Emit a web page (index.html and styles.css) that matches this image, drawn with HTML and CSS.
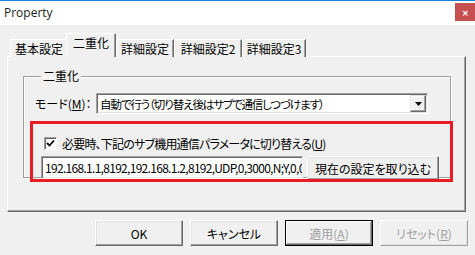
FILE: index.html
```html
<!DOCTYPE html>
<html lang="ja">
<head>
  <meta charset="UTF-8">
  <title>Property</title>
  <link rel="stylesheet" href="styles.css">
</head>
<body>
  <div class="window">
    <div class="titlebar">
      <span class="title">Property</span>
      <span class="close">&#x2715;</span>
    </div>
    <div class="client">
      <div class="tabs">
        <div class="tab tab-kihon">基本設定</div>
        <div class="tab active tab-niju">二重化</div>
        <div class="tab tab-shosai">詳細設定</div>
        <div class="tab tab-shosai2">詳細設定2</div>
        <div class="tab tab-shosai3">詳細設定3</div>
      </div>
      <div class="panel">
        <fieldset class="group">
          <legend>二重化</legend>
          <div class="mode-row">
            <label class="mode-label">モード(<u>M</u>)：</label>
            <div class="combo">
              <span class="combo-text">自動で行う（切り替え後はサブで通信しつづけます）</span>
              <span class="combo-btn">
                <svg width="7" height="4" viewBox="0 0 7 4"><path d="M0 0h7L3.5 4z" fill="#000"/></svg>
              </span>
            </div>
          </div>
          <div class="check-row">
            <span class="checkbox">
              <svg width="9" height="9" viewBox="0 0 9 9"><path d="M1 4l2.5 2.5L8 1.5" stroke="#000" stroke-width="1.8" fill="none"/></svg>
            </span>
            <span class="check-text">必要時、下記のサブ機用通信パラメータに切り替える(<u>U</u>)</span>
          </div>
          <div class="param-row">
            <div class="edit"><span class="edit-text">192.168.1.1,8192,192.168.1.2,8192,UDP,0,3000,N;Y,0,0,0</span></div>
            <button class="btn btn-import">現在の設定を取り込む</button>
          </div>
        </fieldset>
        <div class="highlight"></div>
      </div>
      <div class="buttons">
        <button class="btn btn-dlg">OK</button>
        <button class="btn btn-dlg">キャンセル</button>
        <button class="btn btn-dlg btn-default disabled">適用(<u>A</u>)</button>
        <button class="btn btn-dlg btn-flat disabled">リセット(<u>R</u>)</button>
      </div>
    </div>
  </div>
</body>
</html>
```

FILE: styles.css
```css
body {
  margin: 0;
  background-color: #f0f0f0;
  font-family: "Noto Sans CJK JP", sans-serif;
  font-size: 12px;
  font-feature-settings: "palt" 1;
  color: #000;
}

.window {
  width: 475px;
  height: 255px;
  overflow: hidden;
}

.titlebar {
  height: 24px;
  background-color: #fff;
  border-top: 1px solid #1883d7;
  display: flex;
  justify-content: space-between;
  align-items: flex-start;
}

.title {
  font-family: "Open Sans", "Noto Sans", sans-serif;
  font-size: 12px;
  color: #1b1b1b;
  padding: 4px 0 0 4px;
  line-height: 16px;
}

.close {
  width: 20px;
  height: 18px;
  margin-top: 2px;
  background-color: #c75050;
  color: #fff;
  font-size: 8px;
  font-weight: bold;
  display: flex;
  align-items: center;
  justify-content: center;
}

.client {
  padding: 8px 0 0 7px;
}

/* tabs */
.tabs {
  display: flex;
  align-items: flex-end;
  padding-left: 3px;
  height: 24px;
  position: relative;
  z-index: 1;
}

.tab {
  height: 18px;
  line-height: 18px;
  box-sizing: border-box;
  border-top: 1px solid #fff;
  border-left: 1px solid #fff;
  border-right: 1px solid #696969;
  box-shadow: inset -1px 0 #a0a0a0;
  text-align: center;
  background-color: #f0f0f0;
}

.tab-kihon { width: 58px; }
.tab-niju { width: 50px; }
.tab-shosai { width: 58px; }
.tab-shosai2 { width: 68px; }
.tab-shosai3 { width: 64px; }

.tab.active {
  height: 24px;
  line-height: 17px;
  margin: 0 -2px 0 -2px;
  position: relative;
  z-index: 2;
}

.tab-shosai {
  margin-left: 2px;
}

/* panel */
.panel {
  position: relative;
  width: 459px;
  height: 156px;
  margin-top: -1px;
  box-sizing: border-box;
  border-top: 1px solid #fff;
  border-left: 1px solid #fff;
  border-right: 1px solid #696969;
  border-bottom: 1px solid #696969;
  box-shadow: inset -1px -1px #a0a0a0;
  padding: 12px 0 0 15px;
}

.group {
  margin: 0;
  width: 428px;
  height: 109px;
  box-sizing: border-box;
  padding: 0 0 0 11px;
  border: 1px solid #a0a0a0;
  box-shadow: inset 1px 1px #fff, 1px 1px #fff;
}

.group legend {
  padding: 0 2px;
  margin-left: 6px;
  line-height: 14px;
}

.mode-row {
  display: flex;
  align-items: center;
  margin-top: 10px;
}

.mode-label {
  width: 61px;
}

.combo {
  width: 332px;
  height: 21px;
  box-sizing: border-box;
  display: flex;
  align-items: center;
  justify-content: space-between;
  background-color: #fff;
  border-top: 1px solid #a0a0a0;
  border-left: 1px solid #a0a0a0;
  border-right: 1px solid #fff;
  border-bottom: 1px solid #fff;
  box-shadow: inset 1px 1px #696969, inset -1px -1px #e3e3e3;
}

.combo-text {
  padding-left: 3px;
  white-space: nowrap;
  font-size: 11.5px;
  letter-spacing: -1.1px;
}

.combo-btn {
  width: 16px;
  height: 17px;
  box-sizing: border-box;
  margin-right: 1px;
  display: flex;
  align-items: center;
  justify-content: center;
  background-color: #f0f0f0;
  border-top: 1px solid #e3e3e3;
  border-left: 1px solid #e3e3e3;
  border-right: 1px solid #696969;
  border-bottom: 1px solid #696969;
  box-shadow: inset -1px -1px #a0a0a0, inset 1px 1px #fff;
}

.check-row {
  display: flex;
  align-items: center;
  margin-top: 22px;
  padding-left: 9px;
  height: 14px;
}

.check-text {
  letter-spacing: -0.8px;
}

.checkbox {
  width: 13px;
  height: 13px;
  box-sizing: border-box;
  display: flex;
  align-items: center;
  justify-content: center;
  background-color: #fff;
  border-top: 1px solid #a0a0a0;
  border-left: 1px solid #a0a0a0;
  border-right: 1px solid #fff;
  border-bottom: 1px solid #fff;
  box-shadow: inset 1px 1px #696969;
  margin-right: 5px;
}

.param-row {
  display: flex;
  align-items: flex-start;
  margin-top: 6px;
  margin-left: 6px;
  gap: 4px;
}

.edit {
  width: 262px;
  height: 23px;
  box-sizing: border-box;
  line-height: 21px;
  padding-left: 3px;
  white-space: nowrap;
  overflow: hidden;
  background-color: #fff;
  border-top: 1px solid #a0a0a0;
  border-left: 1px solid #a0a0a0;
  border-right: 1px solid #fff;
  border-bottom: 1px solid #fff;
  box-shadow: inset 1px 1px #696969, inset -1px -1px #e3e3e3;
}

.edit-text {
  letter-spacing: -0.7px;
}

/* buttons */
.btn {
  font-family: inherit;
  font-size: 12px;
  font-feature-settings: "palt" 1;
  color: #000;
  background-color: #f0f0f0;
  box-sizing: border-box;
  padding: 0;
  border-top: 1px solid #fff;
  border-left: 1px solid #fff;
  border-right: 1px solid #696969;
  border-bottom: 1px solid #696969;
  box-shadow: inset -1px -1px #a0a0a0, inset 1px 1px #e3e3e3;
}

.btn-import {
  width: 132px;
  height: 24px;
}

.highlight {
  position: absolute;
  left: 22px;
  top: 64px;
  width: 423px;
  height: 61px;
  box-sizing: border-box;
  border: 3px solid #e81c24;
}

.buttons {
  display: flex;
  justify-content: flex-end;
  gap: 7px;
  margin-top: 8px;
  padding-right: 7px;
}

.btn-dlg {
  width: 88px;
  height: 26px;
}

.btn.disabled {
  color: #a0a0a0;
}

.btn-default {
  border: 1px solid #000;
  box-shadow: inset -1px -1px #696969, inset 1px 1px #fff, inset -2px -2px #a0a0a0;
}

.btn-flat {
  border-right-color: #a0a0a0;
  border-bottom-color: #a0a0a0;
  box-shadow: inset -1px -1px #e3e3e3;
}
```
